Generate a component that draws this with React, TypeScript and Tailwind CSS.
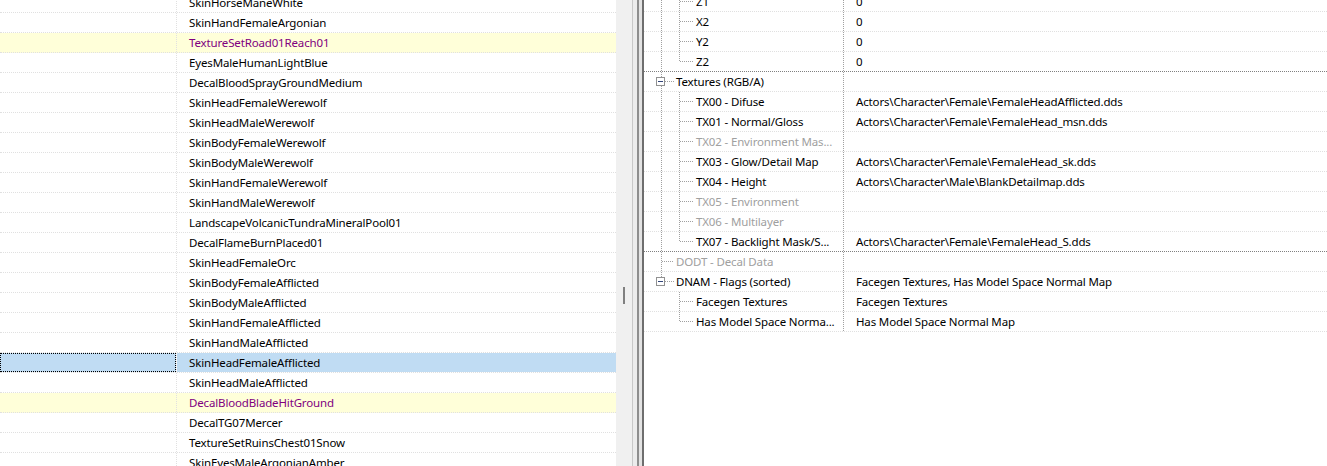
import clsx from "clsx"

type LeftRow = { name: string; mark?: "new" | "sel" }

const leftRows: LeftRow[] = [
  { name: "SkinHorseManeWhite" },
  { name: "SkinHandFemaleArgonian" },
  { name: "TextureSetRoad01Reach01", mark: "new" },
  { name: "EyesMaleHumanLightBlue" },
  { name: "DecalBloodSprayGroundMedium" },
  { name: "SkinHeadFemaleWerewolf" },
  { name: "SkinHeadMaleWerewolf" },
  { name: "SkinBodyFemaleWerewolf" },
  { name: "SkinBodyMaleWerewolf" },
  { name: "SkinHandFemaleWerewolf" },
  { name: "SkinHandMaleWerewolf" },
  { name: "LandscapeVolcanicTundraMineralPool01" },
  { name: "DecalFlameBurnPlaced01" },
  { name: "SkinHeadFemaleOrc" },
  { name: "SkinBodyFemaleAfflicted" },
  { name: "SkinBodyMaleAfflicted" },
  { name: "SkinHandFemaleAfflicted" },
  { name: "SkinHandMaleAfflicted" },
  { name: "SkinHeadFemaleAfflicted", mark: "sel" },
  { name: "SkinHeadMaleAfflicted" },
  { name: "DecalBloodBladeHitGround", mark: "new" },
  { name: "DecalTG07Mercer" },
  { name: "TextureSetRuinsChest01Snow" },
  { name: "SkinEyesMaleArgonianAmber" }
]

type TreeRow = {
  label: string
  value?: string
  level: 1 | 2
  expand?: boolean
  last?: boolean
  lastTop?: boolean
  groupEnd?: boolean
  dim?: boolean
}

const treeRows: TreeRow[] = [
  { label: "Z1", value: "0", level: 2 },
  { label: "X2", value: "0", level: 2 },
  { label: "Y2", value: "0", level: 2 },
  { label: "Z2", value: "0", level: 2, last: true, groupEnd: true },
  { label: "Textures (RGB/A)", level: 1, expand: true },
  { label: "TX00 - Difuse", value: "Actors\\Character\\Female\\FemaleHeadAfflicted.dds", level: 2 },
  { label: "TX01 - Normal/Gloss", value: "Actors\\Character\\Female\\FemaleHead_msn.dds", level: 2 },
  { label: "TX02 - Environment Mas...", level: 2, dim: true },
  { label: "TX03 - Glow/Detail Map", value: "Actors\\Character\\Female\\FemaleHead_sk.dds", level: 2 },
  { label: "TX04 - Height", value: "Actors\\Character\\Male\\BlankDetailmap.dds", level: 2 },
  { label: "TX05 - Environment", level: 2, dim: true },
  { label: "TX06 - Multilayer", level: 2, dim: true },
  {
    label: "TX07 - Backlight Mask/S...",
    value: "Actors\\Character\\Female\\FemaleHead_S.dds",
    level: 2,
    last: true,
    groupEnd: true
  },
  { label: "DODT - Decal Data", level: 1, dim: true },
  {
    label: "DNAM - Flags (sorted)",
    value: "Facegen Textures, Has Model Space Normal Map",
    level: 1,
    expand: true,
    lastTop: true
  },
  { label: "Facegen Textures", value: "Facegen Textures", level: 2, lastTop: true },
  { label: "Has Model Space Norma...", value: "Has Model Space Normal Map", level: 2, last: true, lastTop: true }
]

const dot = { stroke: "#a0a0a0", strokeDasharray: "1 1" }

function Guide({ row }: { row: TreeRow }) {
  const w = row.level === 1 ? 32 : 52
  return (
    <svg width={w} height={19} className="shrink-0">
      {row.level === 2 && !row.lastTop && <line x1={17.5} y1={0} x2={17.5} y2={19} {...dot} />}
      {row.level === 1 && row.expand && (
        <>
          <line x1={17.5} y1={0} x2={17.5} y2={5} {...dot} />
          {!row.lastTop && <line x1={17.5} y1={14} x2={17.5} y2={19} {...dot} />}
          <rect x={12.5} y={5.5} width={8} height={8} fill="#fff" stroke="#919191" />
          <line x1={14} y1={9.5} x2={19} y2={9.5} stroke="#33467a" />
          <line x1={21} y1={9.5} x2={30} y2={9.5} {...dot} />
        </>
      )}
      {row.level === 1 && !row.expand && (
        <>
          <line x1={17.5} y1={0} x2={17.5} y2={19} {...dot} />
          <line x1={18} y1={9.5} x2={30} y2={9.5} {...dot} />
        </>
      )}
      {row.level === 2 && (
        <>
          <line x1={35.5} y1={0} x2={35.5} y2={row.last ? 10 : 19} {...dot} />
          <line x1={36} y1={9.5} x2={49} y2={9.5} {...dot} />
        </>
      )}
    </svg>
  )
}

export default function App() {
  return (
    <div className="flex h-[466px] w-[1327px] overflow-hidden bg-white font-['Noto_Sans',sans-serif] text-[11.5px] tracking-[-0.15px] text-black">
      {/* record list */}
      <div className="w-[616px] shrink-0 overflow-hidden">
        <div className="-mt-[7px]">
          {leftRows.map((r) => (
            <div
              key={r.name}
              className={clsx(
                "flex h-5 border-b border-dotted border-[#e0e0e0]",
                r.mark === "new" && "bg-[#ffffd9]"
              )}
            >
              <div className="w-[177px] shrink-0 border-r border-dotted border-[#e0e0e0]">
                {r.mark === "sel" && (
                  <div className="h-full border border-dotted border-black bg-[#c0dcf3]" />
                )}
              </div>
              <div
                className={clsx(
                  "flex-1 truncate pl-3 leading-[19px]",
                  r.mark === "new" && "text-[#800080]",
                  r.mark === "sel" && "bg-[#c0dcf3]"
                )}
              >
                {r.name}
              </div>
            </div>
          ))}
        </div>
      </div>

      {/* splitter */}
      <div className="flex shrink-0">
        <div className="w-4 bg-[#f0f0f0] pt-[287px]">
          <div className="ml-[7px] h-[17px] w-[2px] bg-[#808080]" />
        </div>
        <div className="w-px bg-[#c8c8c8]" />
        <div className="w-1 bg-[#ececec]" />
        <div className="w-[2px] bg-[#8e8e8e]" />
        <div className="w-[3px] bg-[#e3e3e3]" />
        <div className="w-[2px] bg-[#6e6e6e]" />
      </div>

      {/* record view */}
      <div className="flex-1 overflow-hidden">
        <div className="-mt-[8px]">
          {treeRows.map((r) => (
            <div
              key={r.label}
              className={clsx(
                "flex h-5 border-b border-dotted",
                r.groupEnd ? "border-[#808080]" : "border-[#e0e0e0]"
              )}
            >
              <div className="flex w-[199px] shrink-0 overflow-hidden">
                <Guide row={r} />
                <span className={clsx("whitespace-nowrap leading-[19px]", r.dim && "text-[#a0a0a0]")}>
                  {r.label}
                </span>
              </div>
              <div className="flex-1 truncate border-l border-dotted border-[#a0a0a0] pl-3 leading-[19px]">
                {r.value}
              </div>
            </div>
          ))}
        </div>
      </div>
    </div>
  )
}
